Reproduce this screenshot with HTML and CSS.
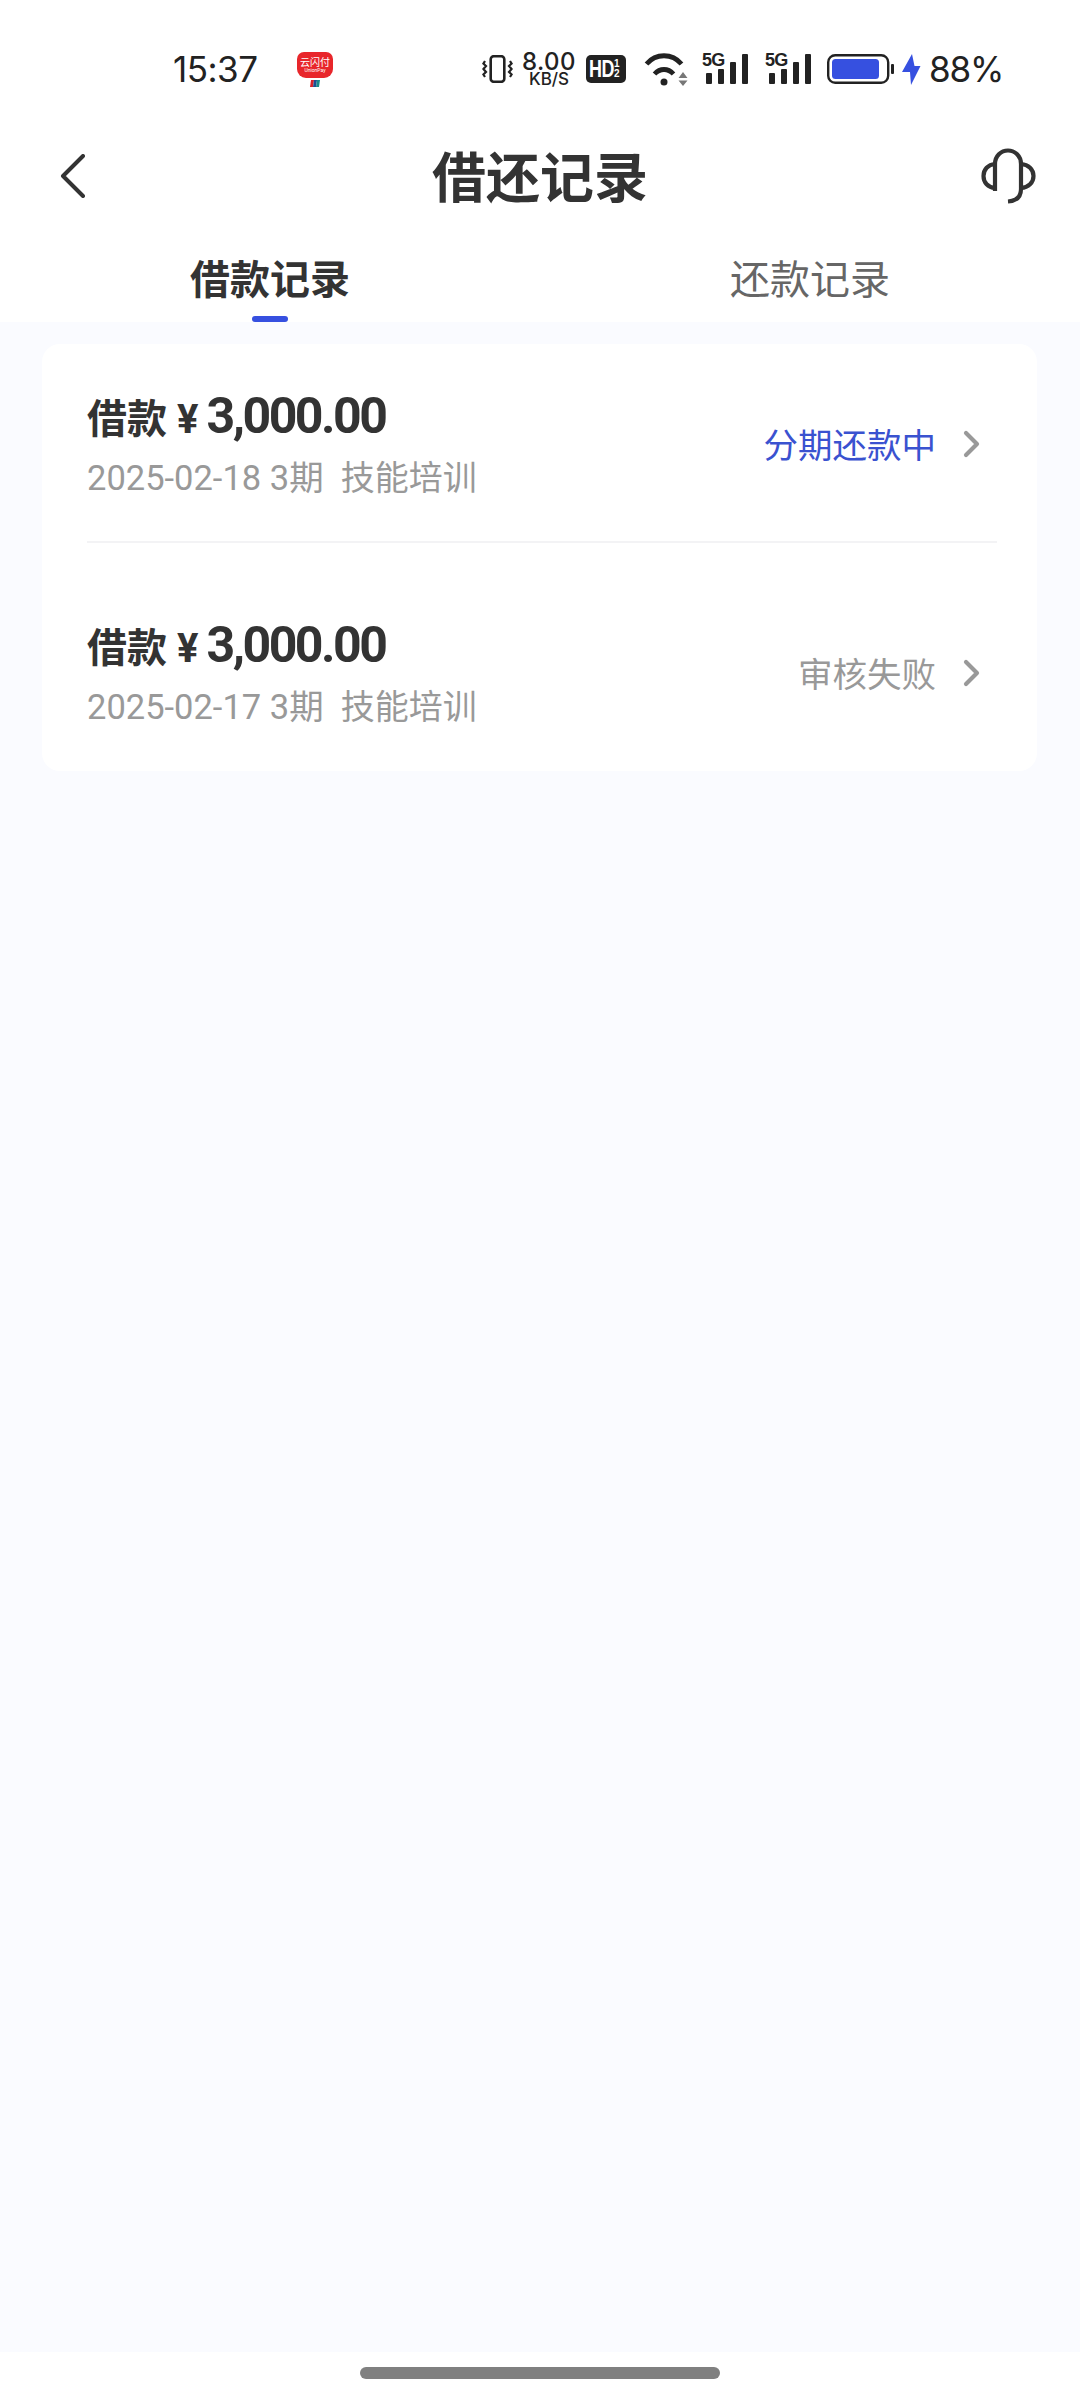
FILE: index.html
```html
<!DOCTYPE html>
<html lang="zh-CN">
<head>
<meta charset="utf-8">
<title>借还记录</title>
<link rel="stylesheet" href="styles.css">
</head>
<body>
<div class="phone">
  <header class="status">
    <span class="time">15:37</span>
    <div class="unionpay">
      <div class="up-badge"><span class="up-cn">云闪付</span><span class="up-en">UnionPay</span></div>
      <svg class="up-flag" width="10" height="7" viewBox="0 0 10 7"><path d="M1 0h3L3 7H0z" fill="#d8232a"/><path d="M4 0h3L6 7H3z" fill="#1d4f91"/><path d="M7 0h3L9 7H6z" fill="#1a8a8a"/></svg>
    </div>
    <div class="status-right">
      <svg class="i-vib" width="31" height="28" viewBox="0 0 31 28" fill="none" stroke="#222">
        <rect x="8.700" y="1.200" width="13.600" height="25.600" rx="3" stroke-width="2.600"/>
        <path d="M3 6l-1.600 2.600L4 11 1.400 14 4 17l-2.600 2.500L3 22M28 6l1.600 2.600L27 11l2.600 3-2.600 3 2.600 2.500L28 22" stroke-width="2.200"/>
      </svg>
      <div class="speed"><span class="speed-num">8.00</span><span class="speed-unit">KB/S</span></div>
      <div class="hd"><span class="hd-main">HD</span><span class="hd-frac"><i>1</i><i>2</i></span></div>
      <svg class="i-wifi" width="46" height="34" viewBox="0 0 46 34" fill="none" stroke="#222" stroke-width="4.800">
        <path d="M2.500 12C12 1 28 1 37.500 12"/>
        <path d="M10.500 22C16 16 24 16 29.500 22"/>
        <circle cx="20" cy="30" r="3.500" fill="#222" stroke="none"/>
        <path d="M34.500 26l4.500-6 4.500 6zM34.500 28.500l4.500 5.500 4.500-5.500z" fill="#777" stroke="none"/>
      </svg>
      <div class="sig">
        <span class="sig-5g">5G</span>
        <svg width="46" height="30" viewBox="0 0 46 30" fill="#222"><rect x="4" y="19" width="6" height="11" rx="1"/><rect x="16" y="15" width="6" height="15" rx="1"/><rect x="28" y="8" width="6" height="22" rx="1"/><rect x="40" y="0" width="6" height="30" rx="1"/></svg>
      </div>
      <div class="sig sig-2">
        <span class="sig-5g">5G</span>
        <svg width="46" height="30" viewBox="0 0 46 30" fill="#222"><rect x="4" y="19" width="6" height="11" rx="1"/><rect x="16" y="15" width="6" height="15" rx="1"/><rect x="28" y="8" width="6" height="22" rx="1"/><rect x="40" y="0" width="6" height="30" rx="1"/></svg>
      </div>
      <svg class="i-batt" width="67" height="30" viewBox="0 0 67 30"><rect x="1.200" y="1.200" width="60" height="27.600" rx="7" fill="none" stroke="#222" stroke-width="2.400"/><rect x="5" y="5" width="47" height="20" rx="3.500" fill="#3650e0"/><rect x="64" y="10" width="3" height="10" rx="1" fill="#222"/></svg>
      <svg class="i-bolt" width="19" height="31" viewBox="0 0 19 31"><path d="M10 0L0 18h8l1 13L18.500 12H12.500z" fill="#3650e0"/></svg>
      <span class="batt-pct">88%</span>
    </div>
  </header>

  <nav class="nav">
    <svg class="nav-back" width="26" height="44" viewBox="0 0 26 44" fill="none" stroke="#333" stroke-width="4" stroke-linecap="round" stroke-linejoin="round"><path d="M23 2L3 22l20 20"/></svg>
    <h1 class="nav-title">借还记录</h1>
    <svg class="nav-help" width="56" height="56" viewBox="0 0 56 56" fill="none" stroke="#333" stroke-width="4.200"><path d="M14 43V16C14 8 20 2.500 27 2.500S40 8 40 16v25c0 8-5 12-13 12.500"/><path d="M14 16C7 16.500 2.500 21.500 2.500 28S7 39.500 14 40M40 16c7.500.5 12.500 5.500 12.500 12S47.500 39.500 40 40"/></svg>
  </nav>

  <div class="tabs">
    <div class="tab tab-on"><span>借款记录</span><i class="tab-bar"></i></div>
    <div class="tab"><span>还款记录</span></div>
  </div>

  <main class="content">
    <section class="card">
      <div class="row row-first">
        <div class="row-main">
          <div class="row-title"><span class="lbl">借款</span><span class="yen">¥</span><span class="amt">3,000.00</span></div>
          <div class="row-sub"><span>2025-02-18 3期</span><span class="sub-tag">技能培训</span></div>
        </div>
        <span class="state state-blue">分期还款中</span>
        <svg class="chev" width="18" height="28" viewBox="0 0 18 28" fill="none" stroke="#999" stroke-width="4.200" stroke-linecap="round" stroke-linejoin="round"><path d="M3 3l11 11L3 25"/></svg>
      </div>
      <div class="row row-next">
        <div class="row-main">
          <div class="row-title"><span class="lbl">借款</span><span class="yen">¥</span><span class="amt">3,000.00</span></div>
          <div class="row-sub"><span>2025-02-17 3期</span><span class="sub-tag">技能培训</span></div>
        </div>
        <span class="state">审核失败</span>
        <svg class="chev" width="18" height="28" viewBox="0 0 18 28" fill="none" stroke="#999" stroke-width="4.200" stroke-linecap="round" stroke-linejoin="round"><path d="M3 3l11 11L3 25"/></svg>
      </div>
    </section>
  </main>

  <footer class="home"><i class="home-bar"></i></footer>
</div>
</body>
</html>
```
FILE: styles.css
```css
* { box-sizing: border-box; }
html, body { margin: 0; padding: 0; background: #fff; }
body { font-family: Roboto, "Noto Sans CJK SC", sans-serif; color: #333; }
i { font-style: normal; }
.phone { width: 1080px; height: 2400px; display: flex; flex-direction: column; overflow: hidden; }

/* status bar */
.status { height: 138px; flex: none; display: flex; align-items: center; padding: 0 78px 0 173px; color: #222; }
.time { font-family: Inter, sans-serif; font-size: 35px; width: 124px; line-height: 1; letter-spacing: -0.5px; }
.unionpay { display: flex; flex-direction: column; align-items: center; width: 36px; }
.up-badge { width: 36px; height: 26px; background: #e8262b; border-radius: 7px 7px 9px 9px; color: #fff; display: flex; flex-direction: column; align-items: center; justify-content: center; overflow: hidden; }
.up-cn { font-family: "Noto Sans CJK SC", sans-serif; font-size: 10px; line-height: 11px; }
.up-en { font-size: 5px; line-height: 6px; }
.up-flag { margin-top: 2px; }
.status-right { margin-left: auto; display: flex; align-items: center; }
.speed { display: flex; flex-direction: column; align-items: center; margin-left: 11px; width: 50px; font-family: Inter, sans-serif; font-weight: 500; }
.speed-num { font-size: 24px; line-height: 21px; letter-spacing: 0.5px; }
.speed-unit { font-size: 17px; line-height: 15px; }
.hd { margin-left: 12px; width: 40px; height: 28px; background: #222; border-radius: 5px; color: #fff; display: flex; align-items: center; justify-content: flex-start; padding-left: 3px; font-family: "Liberation Sans", sans-serif; font-weight: 700; }
.hd-main { font-size: 23px; line-height: 28px; width: 24px; transform: scaleX(0.78); transform-origin: left center; letter-spacing: -0.5px; }
.hd-frac { display: flex; flex-direction: column; align-items: center; font-size: 10px; line-height: 10px; margin-left: 1px; }
.i-wifi { margin-left: 18px; }
.sig { position: relative; width: 46px; height: 30px; margin-left: 12px; }
.sig-2 { margin-left: 17px; }
.sig svg { display: block; }
.sig-5g { position: absolute; left: 0; top: -2px; font-family: "Liberation Sans", sans-serif; font-weight: 700; font-size: 18px; line-height: 16px; letter-spacing: -0.8px; color: #222; }
.i-batt { margin-left: 16px; }
.i-bolt { margin-left: 8px; }
.batt-pct { font-family: Inter, sans-serif; font-size: 35px; line-height: 1; margin-left: 8px; width: 73px; white-space: nowrap; letter-spacing: -1.200px; }

/* nav */
.nav { height: 76px; flex: none; display: flex; align-items: center; justify-content: space-between; padding: 0 43px 0 60px; position: relative; }
.nav-title { margin: 0; font-family: "Noto Sans CJK SC", sans-serif; font-size: 54px; font-weight: 700; line-height: 74px; color: #333; position: absolute; top: 0; left: 0; right: 0; text-align: center; }
.nav-back { display: block; }

/* tabs */
.tabs { height: 108px; flex: none; display: flex; }
.tab { flex: 1; display: flex; flex-direction: column; align-items: center; padding-top: 33px; font-family: "Noto Sans CJK SC", sans-serif; font-size: 40px; line-height: 60px; color: #666; }
.tab-on { color: #333; font-weight: 700; }
.tab-bar { width: 36px; height: 6px; border-radius: 3px; background: #3650e0; margin-top: 9px; }

/* content */
.content { flex: 1; background: #fafbff; padding: 22px 43px 0 42px; }
.card { background: #fff; border-radius: 18px; padding: 0 40px 0 45px; }
.row { display: flex; align-items: center; padding-right: 16px; }
.row-first { height: 199px; padding-top: 3px; border-bottom: 2px solid #f3f3f5; }
.row-next { height: 228px; padding-top: 31px; }
.row-main { flex: 1; }
.row-title { display: flex; align-items: baseline; line-height: 56px; color: #333; font-weight: 700; margin-top: 3px; }
.lbl { font-family: "Noto Sans CJK SC", sans-serif; font-size: 40px; }
.yen { font-family: Roboto, sans-serif; font-size: 40px; margin-left: 10px; }
.amt { font-family: Roboto, sans-serif; font-size: 50px; margin-left: 8px; letter-spacing: -2.500px; }
.row-sub { font-family: Roboto, "Noto Sans CJK SC", sans-serif; font-size: 34.500px; line-height: 50px; color: #999; margin-top: 5px; }
.sub-tag { margin-left: 17px; font-size: 34px; }
.state { font-family: "Noto Sans CJK SC", sans-serif; font-size: 34.500px; color: #999; margin-bottom: 2px; }
.state-blue { color: #3a52d0; }
.chev { margin-left: 27px; }

/* home */
.home { height: 48px; flex: none; display: flex; justify-content: center; padding-top: 15px; }
.home-bar { width: 360px; height: 12px; border-radius: 6px; background: #808080; }
```
